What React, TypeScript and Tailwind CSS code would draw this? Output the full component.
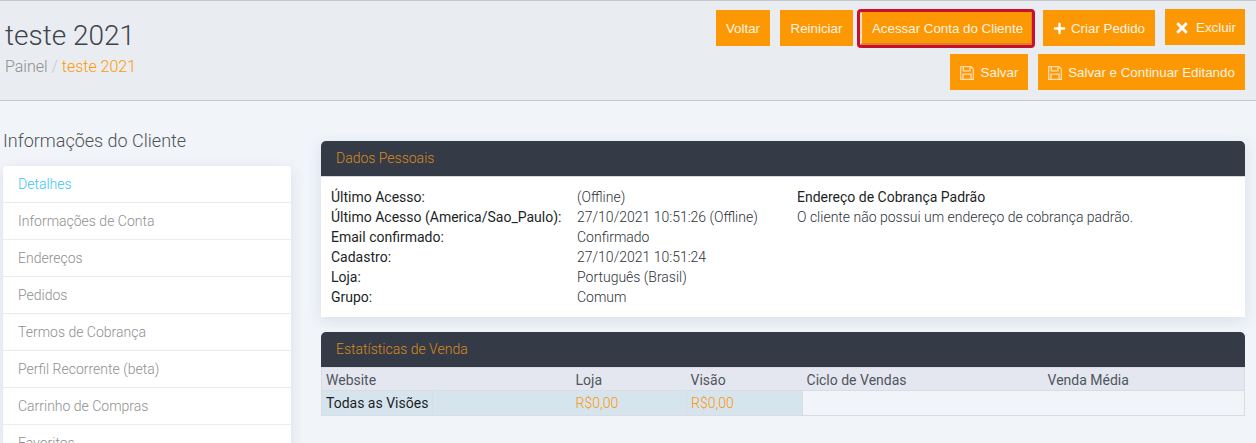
import { FaPlus, FaTimes } from "react-icons/fa";
import type { ReactNode } from "react";

function Btn({ children, className = "" }: { children: ReactNode; className?: string }) {
  return (
    <button className={`flex h-9 items-center justify-center bg-[#fc9803] pt-px text-[13.33px] text-[#fdf3e3] [font-family:'Liberation_Sans',sans-serif] ${className}`}>
      {children}
    </button>
  );
}

function SaveIcon() {
  return (
    <svg viewBox="0 0 14 14" className="size-[14px] shrink-0 text-[#fcdcae]" fill="none" stroke="currentColor" strokeWidth="1.3">
      <path d="M.7.7h10.2l2.4 2.4v10.2H.7z" />
      <path d="M3.3.7v4.2h6.6V.7" />
      <path d="M3 13.3V8.2h8v5.1" />
    </svg>
  );
}

const menu = ["Detalhes", "Informações de Conta", "Endereços", "Pedidos", "Termos de Cobrança", "Perfil Recorrente (beta)", "Carrinho de Compras", "Favoritos"];

const info = [
  ["Último Acesso:", "(Offline)"],
  ["Último Acesso (America/Sao_Paulo):", "27/10/2021 10:51:26 (Offline)"],
  ["Email confirmado:", "Confirmado"],
  ["Cadastro:", "27/10/2021 10:51:24"],
  ["Loja:", "Português (Brasil)"],
  ["Grupo:", "Comum"],
];

function PanelHead({ title }: { title: string }) {
  return (
    <div className="flex h-[35px] items-center rounded-t-[5px] bg-[#343a46] pb-0.5 pl-[15px] text-sm font-light text-[#d98a1c]">
      {title}
    </div>
  );
}

export default function App() {
  return (
    <div className="h-[443px] w-[1256px] overflow-hidden bg-[#f1f4f9] [font-family:Roboto,sans-serif]">
      <header className="flex h-[101px] justify-between border-y border-[#c5c8cd] bg-[#e9ecf1]">
        <div className="pl-[5px] pt-4">
          <h1 className="text-[28px] leading-[38px] font-light text-[#3f444c]">teste 2021</h1>
          <div className="mt-px text-base leading-[22px] font-light text-[#8f8f8f]">
            Painel <span className="text-[#c9c9c9]">/</span> <span className="text-[#ff9900]">teste 2021</span>
          </div>
        </div>
        <div className="flex flex-col items-end pr-[11px]">
          <div className="mt-2 flex h-[37px] items-start">
            <Btn className="mt-px w-[54px]">Voltar</Btn>
            <Btn className="mt-px ml-[10px] w-[73px]">Reiniciar</Btn>
            <Btn className="mt-[3px] ml-[7px] h-[33px] w-[172px] rounded-[1px] border-t border-r border-b-2 border-l-2 border-t-[#fc9803] border-r-[#d9822b] border-b-[#d9822b] border-l-[#f7e3c4] pt-0 pl-0.5 outline-[3px] outline-[#c8102e]">Acessar Conta do Cliente</Btn>
            <Btn className="mt-px ml-[11px] w-[112px] gap-[5px]"><FaPlus className="size-[13px] text-white" />Criar Pedido</Btn>
            <Btn className="ml-[10px] w-[80px] gap-[6px]"><FaTimes className="size-4 text-white" />Excluir</Btn>
          </div>
          <div className="mt-2 flex">
            <Btn className="w-[78px] gap-[7px]"><SaveIcon />Salvar</Btn>
            <Btn className="ml-[10px] w-[207px] gap-[6px]"><SaveIcon />Salvar e Continuar Editando</Btn>
          </div>
        </div>
      </header>

      <div className="flex">
        <aside className="w-[321px] pl-[3px] pt-[29px]">
          <h2 className="text-[18px] leading-[22px] font-light text-[#4f5358]">Informações do Cliente</h2>
          <ul className="mt-[14px] w-[288px] rounded-[3px] bg-white text-sm font-light text-[#8f8f8f] shadow-[0_4px_14px_rgba(60,80,120,0.12)]">
            {menu.map((m, i) => (
              <li key={m} className={`flex h-[37px] items-center border-b border-[#e9ebee] pl-[15px] ${i === 0 ? "text-[#36c6f4]" : ""}`}>
                {m}
              </li>
            ))}
          </ul>
        </aside>

        <main className="w-[924px] pt-10">
          <section className="shadow-[0_4px_14px_rgba(60,80,120,0.12)]">
            <PanelHead title="Dados Pessoais" />
            <div className="flex h-[141px] border-t border-[#d5d8dd] bg-white pl-[10px] pt-[10px] text-sm leading-5">
              <div className="w-[246px] text-[#1b1f26]">
                {info.map(([k]) => (<div key={k}>{k}</div>))}
              </div>
              <div className="w-[220px] font-light text-[#2e323a]">
                {info.map(([k, v]) => (<div key={k}>{v}</div>))}
              </div>
              <div className="font-normal text-[#1b1f26]">
                <div>Endereço de Cobrança Padrão</div>
                <div className="font-light text-[#2e323a]">O cliente não possui um endereço de cobrança padrão.</div>
              </div>
            </div>
          </section>

          <section className="mt-[15px]">
            <PanelHead title="Estatísticas de Venda" />
            <table className="w-full table-fixed border-collapse border border-[#d9dce2] text-sm">
              <colgroup>
                <col className="w-[111px]" />
                <col className="w-[139px]" />
                <col className="w-[115px]" />
                <col className="w-[116px]" />
                <col className="w-[241px]" />
                <col />
              </colgroup>
              <thead>
                <tr className="h-[23px] border-y border-[#d9dce2] bg-[#e4e7ef] text-left font-normal text-[#50555e]">
                  <th className="pt-0.5 pl-[4px] font-normal" colSpan={2}>Website</th>
                  <th className="pt-0.5 pl-[4px] font-normal">Loja</th>
                  <th className="pt-0.5 pl-[4px] font-normal">Visão</th>
                  <th className="pt-0.5 pl-[4px] font-normal">Ciclo de Vendas</th>
                  <th className="pt-0.5 pl-[4px] font-normal">Venda Média</th>
                </tr>
              </thead>
              <tbody>
                <tr className="h-[25px]">
                  <td className="border border-[#d9dce2] bg-[#d6e4ee] pl-[4px] whitespace-nowrap text-[#1b1f26]">Todas as Visões</td>
                  <td className="border-y border-l border-[#d9dce2] bg-[#d6e4ee]"></td>
                  <td className="border-y border-r border-[#d9dce2] bg-[#d6e4ee] pl-[4px] font-light text-[#ff9500]">R$0,00</td>
                  <td className="border border-[#d9dce2] bg-[#d6e4ee] pl-[4px] font-light text-[#ff9500]">R$0,00</td>
                  <td colSpan={2} className="border border-[#d9dce2] bg-[#f1f4f9]"></td>
                </tr>
              </tbody>
            </table>
          </section>
        </main>
      </div>
    </div>
  );
}
